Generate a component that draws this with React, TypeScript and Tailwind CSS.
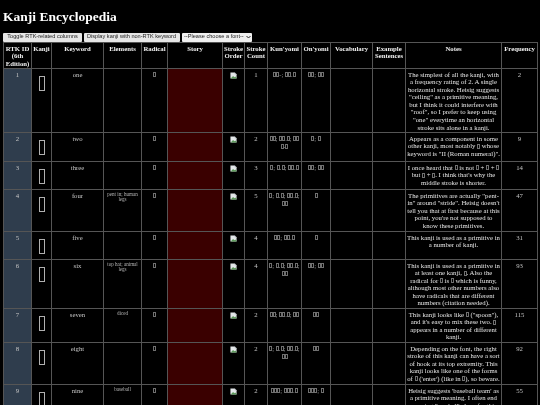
import { Fragment } from "react";

const T = "\u25AF";

interface KanjiRow {
  id: number;
  keyword: string;
  elements?: string;
  strokes: number;
  kun: string;
  on: string;
  notes: string;
  freq: number;
  height: string;
}

const rows: KanjiRow[] = [
  { id: 1, keyword: "one", strokes: 1, kun: `${T}${T}-; ${T}${T}.${T}`, on: `${T}${T}; ${T}${T}`, freq: 2, height: "h-[64px]",
    notes: `The simplest of all the kanji, with a frequency rating of 2. A single horizontal stroke. Heisig suggests "ceiling" as a primitive meaning, but I think it could interfere with "roof", so I prefer to keep using "one" everytime an horizontal stroke sits alone in a kanji.` },
  { id: 2, keyword: "two", strokes: 2, kun: `${T}${T}; ${T}${T}.${T}; ${T}${T} ${T}.${T}`, on: `${T}; ${T}`, freq: 9, height: "h-[29px]",
    notes: `Appears as a component in some other kanji, most notably ${T} whose keyword is "II (Roman numeral)".` },
  { id: 3, keyword: "three", strokes: 3, kun: `${T}; ${T}.${T}; ${T}${T}.${T}`, on: `${T}${T}; ${T}${T}`, freq: 14, height: "h-[28px]",
    notes: `I once heard that ${T} is not ${T} + ${T} + ${T} but ${T} + ${T}. I think that's why the middle stroke is shorter.` },
  { id: 4, keyword: "four", elements: "pent in; human legs", strokes: 5, kun: `${T}; ${T}.${T}; ${T}${T}.${T}; ${T}${T}`, on: T, freq: 47, height: "h-[42px]",
    notes: `The primitives are actually "pent-in" around "stride". Heisig doesn't tell you that at first because at this point, you're not supposed to know these primitives.` },
  { id: 5, keyword: "five", strokes: 4, kun: `${T}${T}; ${T}${T}.${T}`, on: T, freq: 31, height: "h-[28px]",
    notes: "This kanji is used as a primitive in a number of kanji." },
  { id: 6, keyword: "six", elements: "top hat; animal legs", strokes: 4, kun: `${T}; ${T}.${T}; ${T}${T}.${T}; ${T}${T}`, on: `${T}${T}; ${T}${T}`, freq: 93, height: "h-[49px]",
    notes: `This kanji is used as a primitive in at least one kanji, ${T}. Also the radical for ${T} is ${T} which is funny, although most other numbers also have radicals that are different numbers (citation needed).` },
  { id: 7, keyword: "seven", elements: "diced", strokes: 2, kun: `${T}${T}; ${T}${T}.${T}; ${T}${T}`, on: `${T}${T}`, freq: 115, height: "h-[34px]",
    notes: `This kanji looks like ${T} ("spoon"), and it's easy to mix these two. ${T} appears in a number of different kanji.` },
  { id: 8, keyword: "eight", strokes: 2, kun: `${T}; ${T}.${T}; ${T}${T}.${T}; ${T}${T}`, on: `${T}${T}`, freq: 92, height: "h-[42px]",
    notes: `Depending on the font, the right stroke of this kanji can have a sort of hook at its top extremity. This kanji looks like one of the forms of ${T} ('enter') (like in ${T}), so beware.` },
  { id: 9, keyword: "nine", elements: "baseball", strokes: 2, kun: `${T}${T}${T}; ${T}${T}${T}.${T}`, on: `${T}${T}${T}; ${T}`, freq: 55, height: "h-[42px]",
    notes: `Heisig suggests 'baseball team' as a primitive meaning. I often end up using 'baseball' alone for this kanji, as it is shorter.` },
];

const headers: [string, string][] = [
  ["RTK ID (6th Edition)", "w-[28px]"],
  ["Kanji", "w-[20px]"],
  ["Keyword", "w-[52px]"],
  ["Elements", "w-[38px]"],
  ["Radical", "w-[26px]"],
  ["Story", "w-[55px]"],
  ["Stroke Order", "w-[22px]"],
  ["Stroke Count", "w-[23px]"],
  ["Kun'yomi", "w-[34px]"],
  ["On'yomi", "w-[29px]"],
  ["Vocabulary", "w-[42px]"],
  ["Example Sentences", "w-[33px]"],
  ["Notes", "w-[96px]"],
  ["Frequency", "w-[36px]"],
];

// missing-glyph box, the font of the page has no kanji
function Tofu({ text }: { text: string }) {
  return (
    <>
      {text.split(T).map((part, i) => (
        <Fragment key={i}>
          {i > 0 && <span className="inline-block h-[5px] w-[3px] border-[0.5px] border-[#707070] align-[-0.5px]" />}
          {part}
        </Fragment>
      ))}
    </>
  );
}

function BrokenImage() {
  return (
    <svg width="7" height="7" viewBox="0 0 8 8" className="mx-auto mt-px block">
      <path d="M0.5 0.5H5.5L7.5 2.5V7.5H0.5Z" fill="#e4e8ea" />
      <path d="M1 7L3.5 4.5L5 6L6 5L7.5 6.5V7.5H1Z" fill="#5c9a5a" />
      <path d="M5.5 0.5V2.5H7.5" fill="#9aa0a6" />
    </svg>
  );
}

const cell = "border border-[#555] px-px pt-[2px] align-top text-center";

export default function App() {
  return (
    <div className="h-[405px] w-[540px] overflow-hidden bg-black font-['Liberation_Serif',serif] text-[#d8d8d8] blur-[0.3px]">
      <h1 className="pl-[3px] pt-[8px] text-[13.5px] leading-[17px] font-bold text-white">
        Kanji Encyclopedia
      </h1>
      <div className="mt-[8px] flex items-center gap-[1.5px] pl-[3px] font-['Liberation_Sans',sans-serif] text-[5.6px] text-[#222]">
        <button type="button" className="h-[8.5px] w-[79px] rounded-[1px] bg-[#e6e6e6] leading-none">
          Toggle RTK-related columns
        </button>
        <button type="button" className="h-[8.5px] w-[96px] rounded-[1px] bg-[#e6e6e6] leading-none">
          Display kanji with non-RTK keyword
        </button>
        <div className="ml-[1px] flex h-[8.5px] w-[70px] items-center justify-between rounded-[1px] bg-[#f0f0f0] pl-[2px] pr-[1px] leading-none">
          <span>--Please choose a font--</span>
          <svg width="5" height="4" viewBox="0 0 5 4">
            <path d="M0.5 1L2.5 3L4.5 1" fill="none" stroke="#222" strokeWidth="1" />
          </svg>
        </div>
      </div>
      <table className="ml-[3px] w-[534px] table-fixed border-collapse text-[6.75px] leading-[7.6px]">
        <thead>
          <tr className="h-[26px]">
            {headers.map(([label, width]) => (
              <th key={label} className={`${cell} ${width} font-bold text-[#f0f0f0]`}>
                {label}
              </th>
            ))}
          </tr>
        </thead>
        <tbody>
          {rows.map((r) => (
            <tr key={r.id} className={r.height}>
              <td className={`${cell} bg-[#2f3d4d] text-[#c4c4c4]`}>{r.id}</td>
              <td className={cell}>
                <span className="mx-auto mt-[5px] block h-[15px] w-[6px] border border-[#b0b0b0]" />
              </td>
              <td className={`${cell} text-[#c4c4c4]`}>{r.keyword}</td>
              <td className={`${cell} text-[5.1px] leading-[5.8px] text-[#b4b4b4]`}>{r.elements}</td>
              <td className={cell}>
                <Tofu text={T} />
              </td>
              <td className={`${cell} bg-[#3a0000]`} />
              <td className={cell}>
                <BrokenImage />
              </td>
              <td className={`${cell} text-[#c4c4c4]`}>{r.strokes}</td>
              <td className={`${cell} text-[#999]`}>
                <Tofu text={r.kun} />
              </td>
              <td className={`${cell} text-[#999]`}>
                <Tofu text={r.on} />
              </td>
              <td className={cell} />
              <td className={cell} />
              <td className={`${cell} text-[#e4e4e4]`}>
                <Tofu text={r.notes} />
              </td>
              <td className={`${cell} text-[#c4c4c4]`}>{r.freq}</td>
            </tr>
          ))}
        </tbody>
      </table>
    </div>
  );
}
